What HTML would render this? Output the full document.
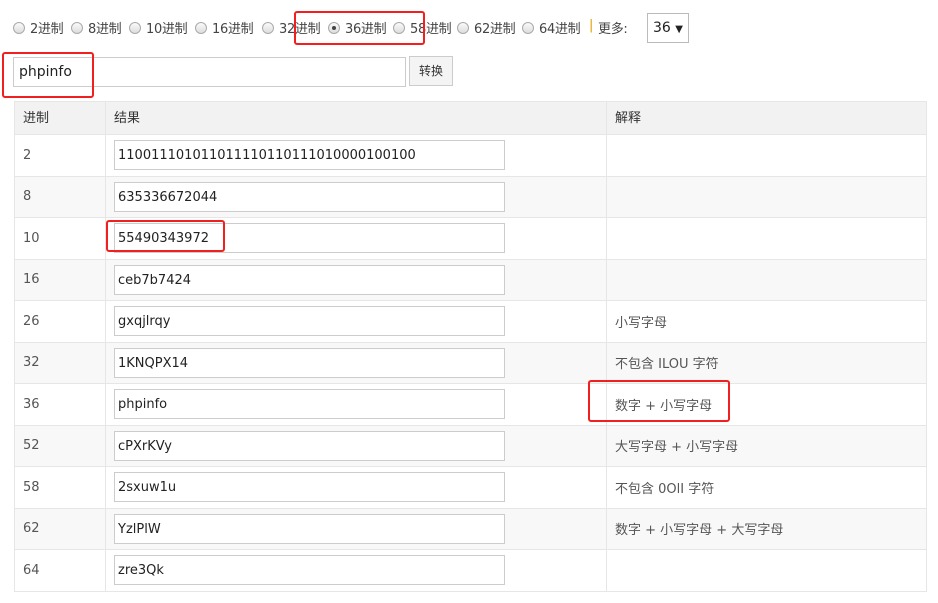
<!DOCTYPE html>
<html><head><meta charset="utf-8"><style>
*{box-sizing:border-box;margin:0;padding:0}
body{width:938px;height:603px;background:#fff;font-family:"DejaVu Sans","Noto Sans CJK SC",sans-serif;font-size:13px;color:#333;position:relative;overflow:hidden}
.a{position:absolute;white-space:nowrap}
.r{position:absolute;top:22px;width:12px;height:12px;border:1px solid #aaa;border-radius:50%;background:linear-gradient(#fafafa,#ddd)}
.r.on::after{content:"";position:absolute;left:3px;top:3px;width:4px;height:4px;border-radius:50%;background:#444}
.l{position:absolute;top:18px;color:#444;white-space:nowrap;font-size:13px;letter-spacing:-0.3px}
.box{position:absolute;border:2px solid #f02020;border-radius:3px}
table{position:absolute;left:14px;top:101px;border-collapse:collapse;width:913px}
td,th{border:1px solid #e6e6e6;height:41.5px;padding:0 8px;text-align:left;font-weight:normal;color:#555;vertical-align:middle}
th{height:33px;background:#f2f2f2;color:#333;padding-bottom:3px}
tr.g td{background:#f8f8f8}
.in{display:block;width:391px;height:30px;border:1px solid #ccc;background:#fff;padding:2px 3px 0;line-height:26px;color:#222}
</style></head><body>
<span class="r" style="left:13px"></span><span class="l" style="left:30px">2进制</span>
<span class="r" style="left:71px"></span><span class="l" style="left:88px">8进制</span>
<span class="r" style="left:129px"></span><span class="l" style="left:146px">10进制</span>
<span class="r" style="left:195px"></span><span class="l" style="left:212px">16进制</span>
<span class="r" style="left:262px"></span><span class="l" style="left:279px">32进制</span>
<span class="r on" style="left:328px"></span><span class="l" style="left:345px">36进制</span>
<span class="r" style="left:393px"></span><span class="l" style="left:410px">58进制</span>
<span class="r" style="left:457px"></span><span class="l" style="left:474px">62进制</span>
<span class="r" style="left:522px"></span><span class="l" style="left:539px">64进制</span>
<span class="l" style="left:589px;color:#e0a000">|</span><span class="l" style="left:598px">更多:</span>
<div class="a" style="left:647px;top:13px;width:42px;height:30px;border:1px solid #bbb;line-height:28px;padding-left:5px;font-size:14px;color:#222">36 <span style="font-size:10px">▼</span></div>
<div class="a" style="left:13px;top:57px;width:393px;height:30px;border:1px solid #ccc;line-height:28px;padding-left:5px;font-size:14px;color:#222">phpinfo</div>
<div class="a" style="left:409px;top:56px;width:44px;height:30px;border:1px solid #ccc;background:#f4f4f4;line-height:28px;text-align:center;font-size:12px">转换</div>
<table>
<tr><th style="width:91px">进制</th><th style="width:501px">结果</th><th>解释</th></tr>
<tr><td>2</td><td><span class="in">110011101011011110110111010000100100</span></td><td></td></tr>
<tr class="g"><td>8</td><td><span class="in">635336672044</span></td><td></td></tr>
<tr><td>10</td><td><span class="in">55490343972</span></td><td></td></tr>
<tr class="g"><td>16</td><td><span class="in">ceb7b7424</span></td><td></td></tr>
<tr><td>26</td><td><span class="in">gxqjlrqy</span></td><td>小写字母</td></tr>
<tr class="g"><td>32</td><td><span class="in">1KNQPX14</span></td><td>不包含 ILOU 字符</td></tr>
<tr><td>36</td><td><span class="in">phpinfo</span></td><td>数字 + 小写字母</td></tr>
<tr class="g"><td>52</td><td><span class="in">cPXrKVy</span></td><td>大写字母 + 小写字母</td></tr>
<tr><td>58</td><td><span class="in">2sxuw1u</span></td><td>不包含 0OlI 字符</td></tr>
<tr class="g"><td>62</td><td><span class="in">YzlPlW</span></td><td>数字 + 小写字母 + 大写字母</td></tr>
<tr><td>64</td><td><span class="in">zre3Qk</span></td><td></td></tr>
</table>
<div class="box" style="left:294px;top:11px;width:131px;height:34px"></div>
<div class="box" style="left:2px;top:52px;width:92px;height:46px"></div>
<div class="box" style="left:106px;top:220px;width:119px;height:32px"></div>
<div class="box" style="left:588px;top:380px;width:142px;height:42px"></div>
</body></html>
